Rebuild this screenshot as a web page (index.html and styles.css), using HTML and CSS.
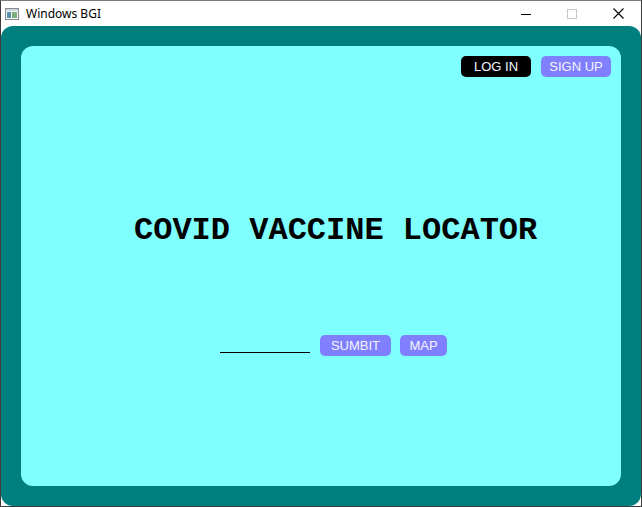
FILE: index.html
```html
<!DOCTYPE html>
<html>
<head>
<meta charset="utf-8">
<title>Windows BGI</title>
<link rel="stylesheet" href="styles.css">
</head>
<body>
<div class="window">
  <div class="titlebar">
    <svg class="app-icon" width="16" height="16" viewBox="0 0 16 16">
      <rect x="1.5" y="2.5" width="13" height="11" fill="#f4f4f4" stroke="#8a8a8a"/>
      <rect x="2" y="3" width="12" height="2" fill="#c9d6e3"/>
      <rect x="3" y="6" width="4" height="6" fill="#5b8fb0"/>
      <rect x="8" y="6" width="5" height="6" fill="#7cb07c"/>
    </svg>
    <span class="title">Windows BGI</span>
    <div class="controls">
      <span class="ctl">
        <svg width="10" height="10" viewBox="0 0 10 10"><line x1="0" y1="5.5" x2="10" y2="5.5" stroke="#000" stroke-width="1"/></svg>
      </span>
      <span class="ctl">
        <svg width="10" height="10" viewBox="0 0 10 10"><rect x="0.5" y="0.5" width="9" height="9" fill="none" stroke="#c8c8c8" stroke-width="1"/></svg>
      </span>
      <span class="ctl">
        <svg width="11" height="11" viewBox="0 0 11 11"><path d="M0.5 0.5 L10.5 10.5 M10.5 0.5 L0.5 10.5" stroke="#000" stroke-width="1.1"/></svg>
      </span>
    </div>
  </div>
  <div class="client">
    <div class="panel">
      <div class="top-row">
        <button class="btn btn-dark">LOG IN</button>
        <button class="btn btn-purple">SIGN UP</button>
      </div>
      <h1 class="headline">COVID VACCINE LOCATOR</h1>
      <div class="form-row">
        <span class="field"></span>
        <button class="btn btn-purple btn-submit">SUMBIT</button>
        <button class="btn btn-purple btn-map">MAP</button>
      </div>
    </div>
  </div>
</div>
</body>
</html>
```
FILE: styles.css
```css
html, body {
  margin: 0;
  padding: 0;
  background: #ffffff;
}
.window {
  width: 642px;
  height: 507px;
  box-sizing: border-box;
  border: 1px solid #3c3c3c;
  border-top-color: #7a7a7a;
  background: #ffffff;
  display: flex;
  flex-direction: column;
  overflow: hidden;
}
.titlebar {
  height: 25px;
  flex: none;
  display: flex;
  align-items: center;
  background: #ffffff;
  font-family: "Noto Sans", "Open Sans", sans-serif;
  font-size: 12px;
  color: #000;
}
.app-icon {
  margin-left: 3px;
  margin-right: 6px;
}
.title {
  line-height: 1;
}
.controls {
  margin-left: auto;
  display: flex;
  height: 100%;
}
.ctl {
  width: 46px;
  height: 100%;
  display: flex;
  align-items: center;
  justify-content: center;
}
.client {
  flex: 1;
  background: #007f7f;
  border-radius: 12px;
  padding: 20px;
  box-sizing: border-box;
  display: flex;
}
.panel {
  flex: 1;
  background: #80ffff;
  border-radius: 12px;
  padding: 10px 10px 0 10px;
  display: flex;
  flex-direction: column;
}
.top-row {
  display: flex;
  justify-content: flex-end;
  gap: 10px;
}
.btn {
  height: 21px;
  border: none;
  border-radius: 5px;
  padding: 0;
  margin: 0;
  font-family: "Liberation Sans", Arial, sans-serif;
  font-size: 13px;
  color: #f4f4ff;
  line-height: 21px;
  text-align: center;
  cursor: pointer;
}
.btn-dark {
  width: 70px;
  background: #000000;
}
.btn-purple {
  width: 70px;
  background: #8080ff;
}
.headline {
  margin: 136px 0 0 103px;
  font-family: "Courier New", "Nimbus Mono PS", "FreeMono", "Liberation Mono", monospace;
  font-weight: bold;
  font-size: 32px;
  line-height: 36px;
  color: #000;
  white-space: nowrap;
}
.form-row {
  display: flex;
  align-items: center;
  margin: 86px 0 0 189px;
  gap: 10px;
}
.field {
  width: 90px;
  height: 21px;
  box-sizing: border-box;
  border-bottom: 1px solid #000;
  transform: translateY(-3px);
}
.btn-submit {
  width: 71px;
}
.btn-map {
  width: 47px;
  margin-left: -1px;
}
```
